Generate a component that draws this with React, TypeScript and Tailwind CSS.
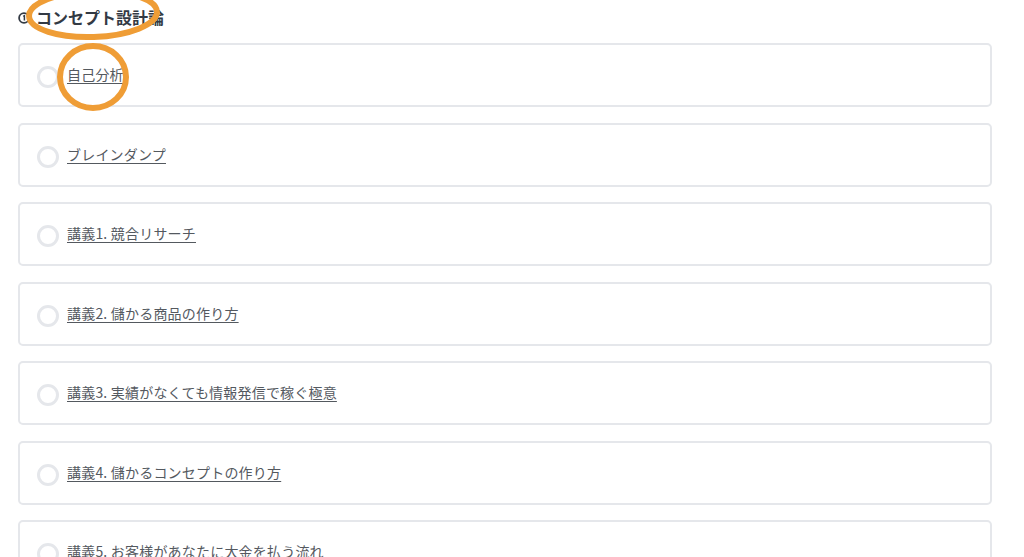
const lessons = [
  "自己分析",
  "ブレインダンプ",
  "講義1. 競合リサーチ",
  "講義2. 儲かる商品の作り方",
  "講義3. 実績がなくても情報発信で稼ぐ極意",
  "講義4. 儲かるコンセプトの作り方",
  "講義5. お客様があなたに大金を払う流れ",
];

const font = { fontFamily: '"Noto Sans CJK JP", "Noto Sans", sans-serif' };

export default function App() {
  return (
    <div className="relative min-h-[557px] bg-white pl-[18px] pr-[32px]" style={font}>
      {/* Section title */}
      <div className="flex h-[36px] items-center gap-[6px] pb-[2px] text-[#333a44]">
        <svg width="12" height="12" viewBox="0 0 12 12" className="mt-[1px]">
          <circle cx="6" cy="6" r="4.9" fill="none" stroke="#333a44" strokeWidth="1.8" />
          <path d="M5.2 4.4 L6.4 3.7 L6.4 8.4" fill="none" stroke="#333a44" strokeWidth="1.5" />
        </svg>
        <h2 className="text-[16px] font-bold leading-6">コンセプト設計論</h2>
      </div>

      {/* Lessons */}
      <div className="mt-[7px] flex flex-col gap-[15.5px]">
        {lessons.map((t) => (
          <div
            key={t}
            className="flex h-[64px] items-center gap-[8px] rounded-[5px] border-2 border-[#e5e7eb] pl-[17px]"
          >
            <span className="mt-[4px] h-[22px] w-[22px] shrink-0 rounded-full border-[3px] border-[#e5e7eb]" />
            <a className="-mt-[2px] text-[14px] leading-5 tracking-[0.2px] text-[#54595f] underline underline-offset-[3px]">
              {t}
            </a>
          </div>
        ))}
      </div>

      {/* Hand-drawn annotations */}
      <svg
        className="pointer-events-none absolute left-0 top-0"
        width="1024"
        height="557"
        viewBox="0 0 1024 557"
      >
        <ellipse cx="93" cy="14" rx="64" ry="23" fill="none" stroke="#ef9d36" strokeWidth="6" transform="rotate(-2 93 14)" />
        <ellipse cx="93" cy="77" rx="33" ry="31" fill="none" stroke="#ef9d36" strokeWidth="6" />
      </svg>
    </div>
  );
}
